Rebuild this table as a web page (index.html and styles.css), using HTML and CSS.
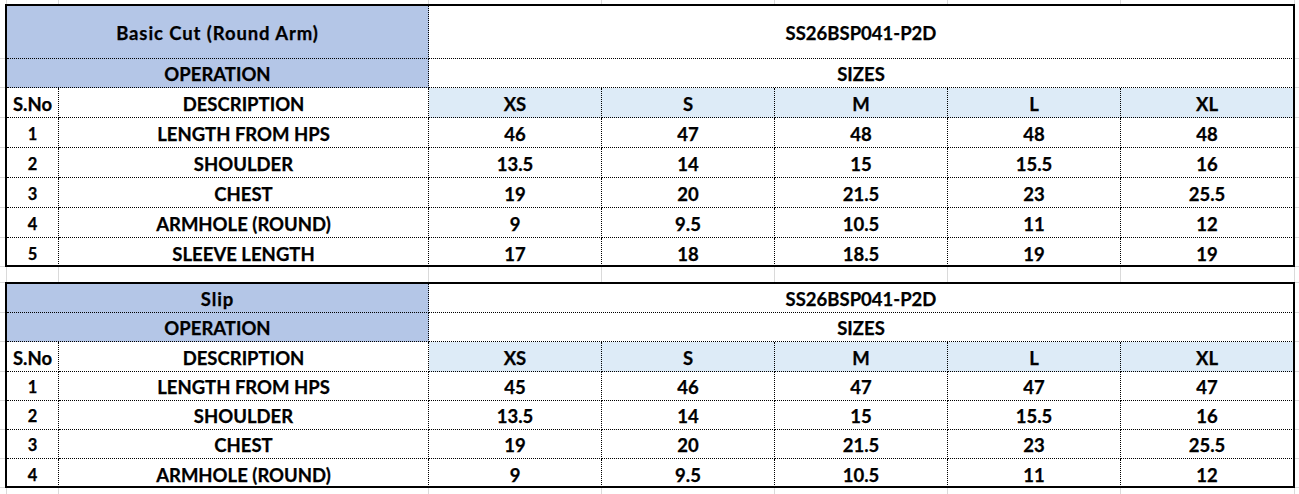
FILE: index.html
```html
<!DOCTYPE html>
<html>
<head>
<meta charset="utf-8">
<title>Size Spec</title>
<link rel="stylesheet" href="styles.css">
</head>
<body>
<div class="sheet">
  <div class="tbl t1">
    <div class="c hd s2 mid mx">Basic Cut (Round Arm)</div>
    <div class="c s5 mid">SS26BSP041-P2D</div>
    <div class="c hd s2">OPERATION</div>
    <div class="c s5">SIZES</div>
    <div class="c">S.No</div>
    <div class="c">DESCRIPTION</div>
    <div class="c sz">XS</div>
    <div class="c sz">S</div>
    <div class="c sz">M</div>
    <div class="c sz">L</div>
    <div class="c sz">XL</div>

    <div class="c n">1</div><div class="c">LENGTH FROM HPS</div>
    <div class="c">46</div><div class="c">47</div><div class="c">48</div><div class="c">48</div><div class="c">48</div>
    <div class="c n">2</div><div class="c">SHOULDER</div>
    <div class="c">13.5</div><div class="c">14</div><div class="c">15</div><div class="c">15.5</div><div class="c">16</div>
    <div class="c n">3</div><div class="c">CHEST</div>
    <div class="c">19</div><div class="c">20</div><div class="c">21.5</div><div class="c">23</div><div class="c">25.5</div>
    <div class="c n">4</div><div class="c">ARMHOLE (ROUND)</div>
    <div class="c">9</div><div class="c">9.5</div><div class="c">10.5</div><div class="c">11</div><div class="c">12</div>
    <div class="c n">5</div><div class="c">SLEEVE LENGTH</div>
    <div class="c">17</div><div class="c">18</div><div class="c">18.5</div><div class="c">19</div><div class="c">19</div>
  </div>

  <div class="tbl t2">
    <div class="c hd s2 mx">Slip</div>
    <div class="c s5">SS26BSP041-P2D</div>
    <div class="c hd s2">OPERATION</div>
    <div class="c s5">SIZES</div>
    <div class="c">S.No</div>
    <div class="c">DESCRIPTION</div>
    <div class="c sz">XS</div>
    <div class="c sz">S</div>
    <div class="c sz">M</div>
    <div class="c sz">L</div>
    <div class="c sz">XL</div>

    <div class="c n">1</div><div class="c">LENGTH FROM HPS</div>
    <div class="c">45</div><div class="c">46</div><div class="c">47</div><div class="c">47</div><div class="c">47</div>
    <div class="c n">2</div><div class="c">SHOULDER</div>
    <div class="c">13.5</div><div class="c">14</div><div class="c">15</div><div class="c">15.5</div><div class="c">16</div>
    <div class="c n">3</div><div class="c">CHEST</div>
    <div class="c">19</div><div class="c">20</div><div class="c">21.5</div><div class="c">23</div><div class="c">25.5</div>
    <div class="c n">4</div><div class="c">ARMHOLE (ROUND)</div>
    <div class="c">9</div><div class="c">9.5</div><div class="c">10.5</div><div class="c">11</div><div class="c">12</div>
  </div>
</div>
</body>
</html>
```

FILE: styles.css
```css
html, body {
  margin: 0;
  padding: 0;
  background: #ffffff;
}

.sheet {
  box-sizing: border-box;
  width: 1299px;
  height: 494px;
  overflow: hidden;
  padding: 4px 0 0 5px;
  background-color: #ffffff;
  background-repeat: no-repeat;
  background-image:
    linear-gradient(#dadada, #dadada), linear-gradient(#dadada, #dadada),
    linear-gradient(#dadada, #dadada), linear-gradient(#dadada, #dadada),
    linear-gradient(#dadada, #dadada), linear-gradient(#dadada, #dadada),
    linear-gradient(#dadada, #dadada), linear-gradient(#dadada, #dadada),
    linear-gradient(#dadada, #dadada), linear-gradient(#dadada, #dadada),
    linear-gradient(#dadada, #dadada), linear-gradient(#dadada, #dadada),
    linear-gradient(#dadada, #dadada), linear-gradient(#dadada, #dadada),
    linear-gradient(#dadada, #dadada), linear-gradient(#dadada, #dadada),
    linear-gradient(#dadada, #dadada), linear-gradient(#dadada, #dadada),
    linear-gradient(#dadada, #dadada), linear-gradient(#dadada, #dadada),
    linear-gradient(#dadada, #dadada), linear-gradient(#dadada, #dadada),
    linear-gradient(#dadada, #dadada), linear-gradient(#dadada, #dadada);
  background-size:
    1px 100%, 1px 100%, 1px 100%, 1px 100%,
    1px 100%, 1px 100%, 1px 100%, 1px 100%,
    100% 1px, 100% 1px, 100% 1px, 100% 1px,
    100% 1px, 100% 1px, 100% 1px, 100% 1px,
    100% 1px, 100% 1px, 100% 1px, 100% 1px,
    100% 1px, 100% 1px, 100% 1px, 100% 1px;
  background-position:
    6px 0, 58px 0, 428px 0, 601px 0,
    774px 0, 947px 0, 1120px 0, 1294px 0,
    0 58px, 0 87px, 0 117px, 0 147px,
    0 177px, 0 207px, 0 237px, 0 266px,
    0 282px, 0 312px, 0 341px, 0 371px,
    0 400px, 0 429px, 0 458px, 0 487px;
}

.tbl {
  display: grid;
  grid-template-columns: 52px 370px 173px 173px 173px 173px 173px;
  width: 1286px;
  border: 2px solid #000;
  overflow: hidden;
  background: #ffffff;
  font-family: Lato, "Liberation Sans", sans-serif;
  font-weight: 700;
  font-size: 18.5px;
  color: #000;
  -webkit-text-stroke: 0.25px #000;
}

.t1 {
  height: 259px;
  grid-template-rows: 53px 29px 30px 30px 30px 30px 30px 28px;
  margin-bottom: 15px;
}

.t2 {
  height: 202px;
  grid-template-rows: 29px 29px 30px 29px 29px 29px 28px;
}

.c {
  box-sizing: border-box;
  display: flex;
  align-items: flex-end;
  justify-content: center;
  border-right: 1px dotted #000;
  border-bottom: 1px dotted #000;
  padding-bottom: 4px;
  line-height: 18px;
  white-space: nowrap;
}

.tbl .c:nth-last-child(-n+7) {
  padding-bottom: 2px;
}

.mid {
  align-items: center;
  padding-bottom: 0;
  padding-top: 1px;
}

.mx {
  letter-spacing: 0.9px;
}

.s2 { grid-column: span 2; }
.s5 { grid-column: span 5; }

.hd { background: #b4c6e7; }
.sz { background: #ddebf7; }

.n {
  font-size: 16.5px;
}
```
